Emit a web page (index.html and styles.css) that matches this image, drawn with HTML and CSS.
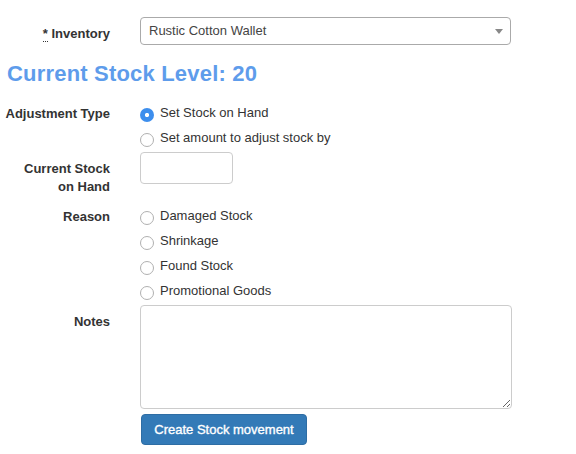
FILE: index.html
```html
<!DOCTYPE html>
<html>
<head>
<meta charset="utf-8">
<link rel="stylesheet" href="styles.css">
</head>
<body>
<form class="page">
  <div class="row">
    <label class="lbl"><abbr class="req" title="required">*</abbr> Inventory</label>
    <div class="select">
      <span class="select-text">Rustic Cotton Wallet</span>
      <span class="select-arrow"></span>
    </div>
  </div>

  <h3 class="level">Current Stock Level: 20</h3>

  <div class="row">
    <label class="lbl">Adjustment Type</label>
    <div class="radios">
      <label class="radio"><input type="radio" name="type" checked><span>Set Stock on Hand</span></label>
      <label class="radio"><input type="radio" name="type"><span>Set amount to adjust stock by</span></label>
    </div>
  </div>

  <div class="row">
    <label class="lbl">Current Stock<br>on Hand</label>
    <div><input class="num" type="text"></div>
  </div>

  <div class="row">
    <label class="lbl">Reason</label>
    <div class="radios">
      <label class="radio"><input type="radio" name="reason"><span>Damaged Stock</span></label>
      <label class="radio"><input type="radio" name="reason"><span>Shrinkage</span></label>
      <label class="radio"><input type="radio" name="reason"><span>Found Stock</span></label>
      <label class="radio"><input type="radio" name="reason"><span>Promotional Goods</span></label>
    </div>
  </div>

  <div class="row">
    <label class="lbl">Notes</label>
    <div><textarea class="notes"></textarea></div>
  </div>

  <div class="row">
    <span></span>
    <div><button type="button" class="btn">Create Stock movement</button></div>
  </div>
</form>
</body>
</html>
```

FILE: styles.css
```css
html, body {
  margin: 0;
  padding: 0;
  background: #fff;
}
body {
  font-family: "Liberation Sans", Arial, sans-serif;
  font-size: 13px;
  line-height: 18px;
  color: #333;
}
.page {
  padding: 17px 0 0 0;
  width: 520px;
}
.row {
  display: grid;
  grid-template-columns: 110px 371px;
  column-gap: 30px;
  margin-bottom: 5px;
}
.lbl {
  font-weight: bold;
  text-align: right;
  padding-top: 8px;
  margin-bottom: -1px;
  color: #333;
  white-space: nowrap;
}
.req {
  text-decoration: none;
  border-bottom: 1px dotted #333;
  cursor: help;
}
.select {
  height: 26px;
  border: 1px solid #aaa;
  border-radius: 4px;
  display: flex;
  align-items: center;
  justify-content: space-between;
  padding: 0 8px;
  color: #444;
}
.select-text {
  line-height: 26px;
  margin-top: -1px;
}
.select-arrow {
  width: 0;
  height: 0;
  border-left: 4px solid transparent;
  border-right: 4px solid transparent;
  border-top: 5px solid #888;
  margin-right: -1px;
  margin-top: 1px;
}
.level {
  margin: 17px 0 11px 7px;
  font-size: 22px;
  line-height: 24px;
  font-weight: bold;
  letter-spacing: 0.19px;
  color: #5e9ceb;
}
.radios {
  display: flex;
  flex-direction: column;
  gap: 7px;
  padding-top: 7px;
}
.radio {
  display: flex;
  align-items: center;
  height: 18px;
}
.radio input {
  -webkit-appearance: none;
  appearance: none;
  width: 14px;
  height: 14px;
  margin: 4px 6px 0 0;
  border: 1px solid #b0b0b0;
  border-radius: 50%;
  background: #fff;
  box-sizing: border-box;
  flex: none;
}
.radio input:checked {
  border: none;
  background: radial-gradient(circle, #fff 0 1.8px, #3d8eed 2.4px);
}
.num {
  width: 93px;
  height: 32px;
  box-sizing: border-box;
  border: 1px solid #ccc;
  border-radius: 4px;
  margin: 0;
  padding: 6px 8px;
  font: inherit;
}
.notes {
  display: block;
  width: 372px;
  height: 104px;
  box-sizing: border-box;
  border: 1px solid #ccc;
  border-radius: 4px;
  margin: 0;
  padding: 6px 8px;
  font: inherit;
  resize: both;
}
.btn {
  width: 166px;
  height: 31px;
  margin-left: 1px;
  padding: 0;
  background: #337ab7;
  border: 1px solid #2e6da4;
  border-radius: 4px;
  color: #fff;
  font-family: "Liberation Sans", Arial, sans-serif;
  font-size: 13px;
  -webkit-text-stroke: 0.35px #fff;
  cursor: pointer;
}
```
